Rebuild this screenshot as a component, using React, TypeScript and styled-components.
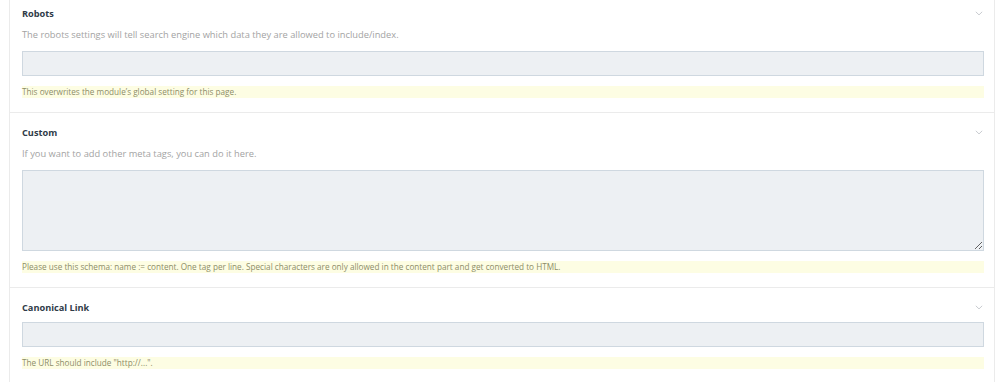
import React from 'react';
import styled, { createGlobalStyle } from 'styled-components';

const GlobalStyle = createGlobalStyle`
  html, body {
    margin: 0;
    padding: 0;
    background: #ffffff;
    font-family: 'Open Sans', 'Liberation Sans', sans-serif;
    overflow: hidden;
  }
`;

const Card = styled.div`
  margin: -7px 0 0 9px;
  width: 986px;
  box-sizing: border-box;
  border: 1px solid #ebebeb;
  background: #ffffff;
`;

const Section = styled.section`
  position: relative;
  padding: 13px 10px 14px 12px;
  border-bottom: 1px solid #ebebeb;

  &:last-child {
    border-bottom: none;
  }
`;

const Title = styled.h3`
  margin: 0 0 7px;
  font-size: 9.2px;
  line-height: 14px;
  font-weight: 700;
  color: #2f3b48;
`;

const Description = styled.p`
  margin: 1px 0 9px;
  font-size: 9.3px;
  line-height: 14px;
  color: #a3a3a3;
`;

const Toggle = styled.span`
  position: absolute;
  top: 17px;
  right: 11px;
  display: flex;
  color: #c9ccd0;
`;

const Input = styled.input`
  display: block;
  width: 100%;
  height: 25px;
  box-sizing: border-box;
  margin: 0;
  border: 1px solid #cfd8e0;
  background: #edf0f3;
  outline: none;
`;

const TextArea = styled.textarea`
  display: block;
  width: 100%;
  height: 81px;
  box-sizing: border-box;
  margin: 0;
  border: 1px solid #cfd8e0;
  background: #edf0f3;
  outline: none;
  resize: vertical;
`;

const Hint = styled.div`
  margin-top: 10px;
  height: 12px;
  line-height: 12px;
  font-size: 8.2px;
  color: #8d8d68;
  background: #fdfde3;
  white-space: nowrap;
`;

function Chevron () {
  return (
    <svg width='8' height='5' viewBox='0 0 8 5' fill='none'>
      <path d='M0.8 0.8 L4 3.9 L7.2 0.8' stroke='currentColor' strokeWidth='1' />
    </svg>
  );
}

type FieldProps = {
  title: string,
  description?: string,
  hint: string,
  multiline?: boolean,
};

function Field ({ description, hint, multiline, title }: FieldProps) {
  return (
    <Section>
      <Toggle><Chevron /></Toggle>
      <Title>{title}</Title>
      {description && <Description>{description}</Description>}
      {multiline ? <TextArea /> : <Input type='text' />}
      <Hint>{hint}</Hint>
    </Section>
  );
}

export default function App () {
  return (
    <>
      <GlobalStyle />
      <Card>
        <Field
          description='The robots settings will tell search engine which data they are allowed to include/index.'
          hint={'This overwrites the module\u2019s global setting for this page.'}
          title='Robots'
        />
        <Field
          description='If you want to add other meta tags, you can do it here.'
          hint='Please use this schema: name := content. One tag per line. Special characters are only allowed in the content part and get converted to HTML.'
          multiline
          title='Custom'
        />
        <Field
          hint={'The URL should include "http://...".'}
          title='Canonical Link'
        />
      </Card>
    </>
  );
}
